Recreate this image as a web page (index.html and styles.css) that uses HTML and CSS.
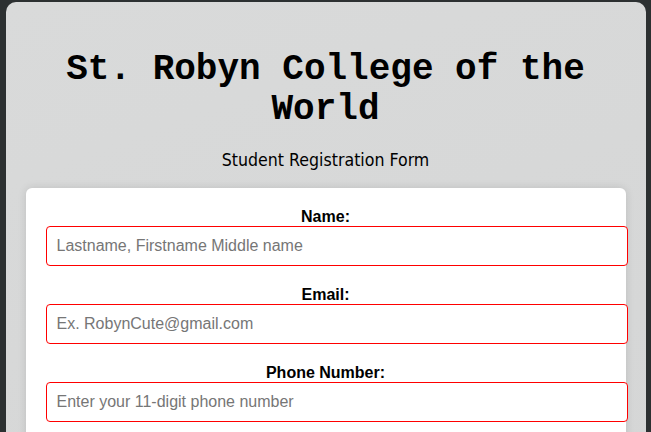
FILE: index.html
```html
<!DOCTYPE html>
<html lang="en">
<head>
<meta charset="utf-8">
<title>Student Registration</title>
<link rel="stylesheet" href="styles.css">
</head>
<body>
<main class="container">
  <h1 class="title">St. Robyn College of the World</h1>
  <p class="subtitle">Student Registration Form</p>
  <form class="card">
    <div class="field">
      <label class="label" for="name">Name:</label>
      <input class="input" id="name" type="text" placeholder="Lastname, Firstname Middle name">
    </div>
    <div class="field">
      <label class="label" for="email">Email:</label>
      <input class="input" id="email" type="email" placeholder="Ex. RobynCute@gmail.com">
    </div>
    <div class="field">
      <label class="label" for="phone">Phone Number:</label>
      <input class="input" id="phone" type="tel" placeholder="Enter your 11-digit phone number">
    </div>
  </form>
</main>
</body>
</html>
```
FILE: styles.css
```css
html, body {
  margin: 0;
  padding: 0;
  background: #2c3031;
}
body {
  padding-top: 2px;
}
.container {
  width: 600px;
  margin: 0 auto;
  padding: 20px 20px 40px;
  background: linear-gradient(160deg, #d9dada 0%, #d4d5d5 100%);
  border-radius: 10px;
  min-height: 600px;
}
.title {
  margin: 28px 20px 0;
  font-family: "Liberation Mono", "Courier New", monospace;
  font-weight: bold;
  font-size: 36px;
  line-height: 40px;
  text-align: center;
  color: #000;
}
.subtitle {
  margin: 20px 0 18px;
  font-family: "DejaVu Sans Condensed", "DejaVu Sans", sans-serif;
  font-size: 17.6px;
  line-height: 20px;
  text-align: center;
  color: #000;
}
.card {
  box-sizing: border-box;
  width: 600px;
  padding: 20px;
  background: #fff;
  border-radius: 6px;
  box-shadow: 0 0 8px rgba(0, 0, 0, 0.12);
}
.field {
  display: flex;
  flex-direction: column;
  align-items: stretch;
  margin-bottom: 20px;
}
.label {
  font-family: "Liberation Sans", Arial, sans-serif;
  font-weight: bold;
  font-size: 16px;
  line-height: 18px;
  text-align: center;
  color: #000;
}
.input {
  box-sizing: content-box;
  width: 100%;
  height: 20px;
  padding: 9px 10px;
  margin: 0;
  border: 1px solid #ff0000;
  border-radius: 4px;
  font-family: "Liberation Sans", Arial, sans-serif;
  font-size: 16px;
  background: #fff;
}
.input::placeholder {
  color: #767676;
}
```
